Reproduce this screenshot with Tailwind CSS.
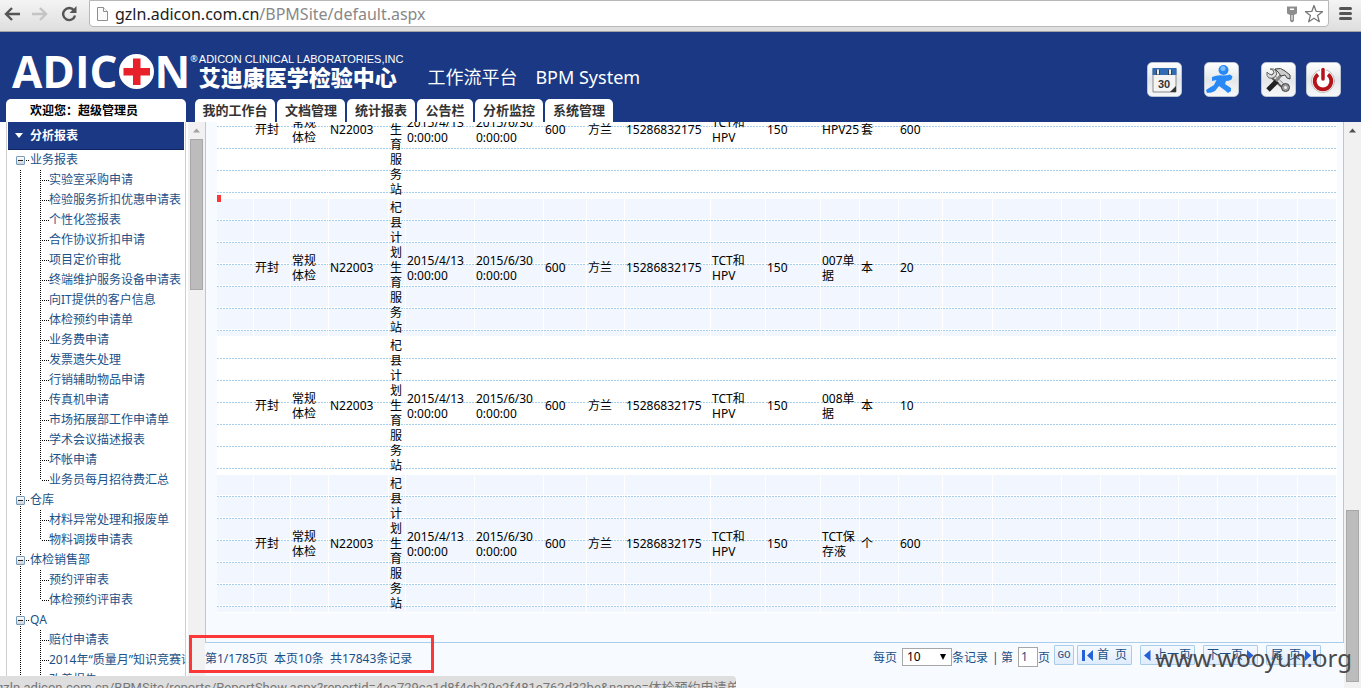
<!DOCTYPE html>
<html lang="zh-CN">
<head>
<meta charset="utf-8">
<title>BPM System</title>
<script src="https://cdn.jsdelivr.net/npm/@tailwindcss/browser@4"></script>
</head>
<body class="relative flex h-screen flex-col overflow-hidden bg-white font-['Noto_Sans','Noto_Sans_CJK_SC',sans-serif] text-xs text-black">

<!-- Browser toolbar -->
<div class="flex h-8 shrink-0 items-start border-b border-[#a3a3a3] bg-linear-to-b from-[#f4f4f4] to-[#dedede]">
  <div class="flex h-7 w-[89px] shrink-0 items-center gap-3 pl-1">
    <button aria-label="后退"><svg class="h-4 w-4" viewBox="0 0 16 16" fill="none" stroke="#555" stroke-width="2.4"><path d="M16 8H2.5M8 2L2 8l6 6"/></svg></button>
    <button aria-label="前进"><svg class="h-4 w-4" viewBox="0 0 16 16" fill="none" stroke="#c4c4c4" stroke-width="2.4"><path d="M0 8h13.500M8 2l6 6-6 6"/></svg></button>
    <button aria-label="重新加载"><svg class="ml-px h-4 w-4" viewBox="0 0 16 16"><path d="M13 4.500A6 6 0 1 0 14 9.500" fill="none" stroke="#555" stroke-width="2.400"/><path d="M15.500 0v7H8.500z" fill="#555"/></svg></button>
  </div>
  <div class="flex h-[27px] flex-1 items-center rounded-b-sm border border-[#b8b8b8] bg-white pl-[6px] pr-1">
    <svg class="h-4 w-[13px] shrink-0" viewBox="0 0 13 16" fill="#fafafa" stroke="#8e8e8e"><path d="M1.500 1.500h6l4 4v9h-10z"/><path d="M7.500 1.500v4h4" /></svg>
    <p class="ml-[6px] flex-1 whitespace-nowrap text-base leading-6 text-[#1c1c1c]">gzln.adicon.com.cn<span class="text-[#888]">/BPMSite/default.aspx</span></p>
    <svg class="h-[18px] w-3" viewBox="0 0 12 18"><path fill="#8d8d8d" fill-rule="evenodd" d="M1 1.500h10v7L8 10v6l-2 1.500L4 16v-6L1 8.500zM4 3.500v1.500h4V3.500zM5.500 10v5h1v-5z"/></svg>
    <svg class="ml-[6px] h-5 w-5" viewBox="0 0 20 20" fill="#fff" stroke="#777" stroke-width="1.300" stroke-linejoin="round"><path d="M10 1.500l2.200 5.900 6.300.3-4.900 3.900 1.700 6.100L10 14.200l-5.300 3.500 1.700-6.100L1.500 7.700l6.300-.3z"/></svg>
  </div>
  <button class="flex h-[27px] w-8 flex-col items-center justify-center gap-[2px]" aria-label="菜单">
    <span class="h-[3px] w-[13px] rounded-sm bg-[#555]"></span><span class="h-[3px] w-[13px] rounded-sm bg-[#555]"></span><span class="h-[3px] w-[13px] rounded-sm bg-[#555]"></span>
  </button>
</div>

<!-- Site header -->
<header class="flex h-[90px] shrink-0 flex-col justify-between bg-[#1a3883]">
  <div class="flex h-[67px] items-end justify-between pr-5">
    <div class="flex items-end whitespace-nowrap pb-[10px] pl-3 text-white">
      <div class="flex h-9 items-center font-['Open_Sans',sans-serif] text-[44px] font-bold leading-9">
        <span>ADIC</span>
        <svg class="mx-px h-[35px] w-[35px]" viewBox="0 0 35 35"><circle cx="17.500" cy="17.500" r="17.500" fill="#fff"/><path d="M14 4.500h7.500v9.500h9.500v7.500h-9.500V31H14v-9.500H4.500V14H14z" fill="#e8202a"/></svg>
        <span>N</span>
      </div>
      <span class="mb-6 text-[9px] leading-3">®</span>
      <div class="ml-px flex flex-col">
        <span class="font-['Liberation_Sans',sans-serif] text-[11px] leading-3">ADICON CLINICAL LABORATORIES,INC</span>
        <span class="text-[22px] font-black leading-6">艾迪康医学检验中心</span>
      </div>
      <div class="ml-6 flex gap-[18px] text-lg leading-6"><span>工作流平台</span><span>BPM System</span></div>
    </div>
    <div class="flex pb-[2px]">
      <button aria-label="日历" class="h-[35px] w-[35px] rounded-[5px] border border-[#b9c3d2] bg-linear-to-b from-white via-[#e4e7ea] to-[#f6f7f8]">
        <svg class="h-full w-full" viewBox="0 0 33 33"><path d="M5 6h23v23H5z" fill="#f4f4f4" stroke="#8a8a8a"/><path d="M4.500 5h24v7h-24z" fill="#2f6cb4"/><path d="M10 7v5M22 7v5" stroke="#333" stroke-width="3.500"/><path d="M10 6.500v5M22 6.500v5" stroke="#fff" stroke-width="1.800"/><path d="M28 23v6h-6z" fill="#333"/><text x="16" y="25" text-anchor="middle" font-family="Liberation Sans" font-weight="bold" font-size="11" fill="#333">30</text></svg>
      </button>
      <button aria-label="流程" class="ml-[22px] h-[35px] w-[35px] rounded-[5px] border border-[#b9c3d2] bg-linear-to-b from-white via-[#e4e7ea] to-[#f6f7f8]">
        <svg class="h-full w-full" viewBox="0 0 33 33"><circle cx="18.500" cy="7" r="5" fill="#2889f6"/><circle cx="18" cy="5.500" r="2.500" fill="#7fc0ff"/><path d="M7 14q6-2.500 11-1.500 4 0 7-1l2.500 2-1 3q-3 1.500-5.500 1.500l-1 3 6 4v3l-3 2-3.500-3-5.500-4-4 5q-3 2-8 2l-1-3 3-2 5-3 2.500-5-4.500 1z" fill="#2889f6"/></svg>
      </button>
      <button aria-label="设置" class="ml-[22px] h-[35px] w-[35px] rounded-[5px] border border-[#b9c3d2] bg-linear-to-b from-white via-[#e4e7ea] to-[#f6f7f8]">
        <svg class="h-full w-full" viewBox="0 0 33 33"><path d="M9 12l14 13" stroke="#555" stroke-width="5"/><path d="M10 12l13 12" stroke="#ddd" stroke-width="2.500"/><path d="M8 6l3 1 1 3-2 2-3-1-2-2q-1 4 2 6 3 1 6-1 3-3 1-6-2-3-6-2z" fill="#ddd" stroke="#666"/><circle cx="23.500" cy="24.500" r="4" fill="#999" stroke="#444"/><circle cx="23.500" cy="24.500" r="1.500" fill="#eee"/><path d="M6 27L15 18" stroke="#222" stroke-width="5"/><path d="M14 18l6-7" stroke="#888" stroke-width="3"/><path d="M13 6q6-2 10 2l5 4v4l-3-1-2-3-4 1-3-4z" fill="#ccc" stroke="#444"/></svg>
      </button>
      <button aria-label="退出" class="ml-[10px] h-[35px] w-[35px] rounded-[5px] border border-[#b9c3d2] bg-linear-to-b from-white via-[#e4e7ea] to-[#f6f7f8]">
        <svg class="h-full w-full" viewBox="0 0 33 33" fill="none" stroke-linecap="round"><circle cx="16" cy="18" r="11.500" fill="#fff" stroke="#aaa" stroke-width=".8"/><path d="M11 11.500a8.300 8.300 0 1 0 10 0" stroke="#b5121b" stroke-width="3.800" stroke-linecap="butt"/><path d="M16 6.500v9" stroke="#fff" stroke-width="6"/><path d="M16 6.500v9.500" stroke="#b5121b" stroke-width="3.500"/></svg>
      </button>
    </div>
  </div>
  <div class="flex h-[23px] whitespace-nowrap pl-[6px]">
    <p class="w-[180px] rounded-t-[5px] bg-white pl-6 font-bold leading-6">欢迎您：超级管理员</p>
    <nav class="ml-[9px] flex gap-[2px] text-[13px] font-bold leading-[22px] text-[#333] *:flex *:h-[23px] *:justify-center *:rounded-t-[5px] *:bg-white">
      <a href="#" class="w-20">我的工作台</a><a href="#" class="w-[68px]">文档管理</a><a href="#" class="w-[68px]">统计报表</a><a href="#" class="w-14">公告栏</a><a href="#" class="w-[68px]">分析监控</a><a href="#" class="w-[68px]">系统管理</a>
    </nav>
  </div>
</header>

<div class="flex min-h-0 flex-1">
  <!-- Report tree -->
  <aside class="flex w-[205px] shrink-0 pl-[6px]">
    <div class="w-[180px] overflow-hidden whitespace-nowrap border-x border-[#cfcfcf] px-px leading-5 text-[#1b5289]">
      <h2 class="flex h-7 items-center border-b border-[#0e2560] bg-[#1a3883] pl-[7px] font-bold text-white">
        <svg class="mr-[7px] h-[5px] w-2" viewBox="0 0 8 5"><path d="M0 0h8L4 5z" fill="#fff"/></svg>分析报表
      </h2>
      <div class="pl-2 [&_h3]:flex [&_h3]:h-5 [&_h3]:items-center
        [&_h3]:bg-[size:1px_2px] [&_h3]:bg-repeat-y [&_h3]:bg-position-[4px_0] [&_h3:not(:first-child)]:bg-[image:linear-gradient(#000_50%,transparent_50%)]
        [&_h3]:before:mr-px [&_h3]:before:h-[9px] [&_h3]:before:w-[9px] [&_h3]:before:shrink-0 [&_h3]:before:rounded-[1px] [&_h3]:before:border [&_h3]:before:border-[#7899b8] [&_h3]:before:bg-[linear-gradient(#222,#222),linear-gradient(#fff,#ccd3da)] [&_h3]:before:bg-[size:5px_1px,100%_100%] [&_h3]:before:bg-center [&_h3]:before:bg-no-repeat [&_h3]:before:content-['']
        [&_i]:mr-px [&_i]:h-px [&_i]:w-[3px] [&_i]:bg-[size:2px_1px] [&_i]:bg-[image:linear-gradient(90deg,#000_50%,transparent_50%)]
        [&_ul]:ml-1 [&_ul]:bg-[size:1px_2px] [&_ul]:bg-repeat-y [&_ul]:bg-[image:linear-gradient(#000_50%,transparent_50%)] [&_ul]:pl-5
        [&_li]:flex [&_li]:h-5 [&_li]:items-center
        [&_li]:before:h-5 [&_li]:before:w-px [&_li]:before:shrink-0 [&_li]:before:bg-[size:1px_2px] [&_li]:before:bg-[image:linear-gradient(#000_50%,transparent_50%)] [&_li]:before:content-['']
        [&_li.end]:before:h-[10px] [&_li.end]:before:self-start
        [&_li]:after:order-1 [&_li]:after:h-px [&_li]:after:w-2 [&_li]:after:shrink-0 [&_li]:after:bg-[size:2px_1px] [&_li]:after:bg-[image:linear-gradient(90deg,transparent_50%,#000_50%)] [&_li]:after:content-[''] [&_li_a]:order-2">
        <h3><i></i><a href="#">业务报表</a></h3>
        <ul>
          <li><a href="#">实验室采购申请</a></li>
          <li><a href="#">检验服务折扣优惠申请表</a></li>
          <li><a href="#">个性化签报表</a></li>
          <li><a href="#">合作协议折扣申请</a></li>
          <li><a href="#">项目定价审批</a></li>
          <li><a href="#">终端维护服务设备申请表</a></li>
          <li><a href="#">向IT提供的客户信息</a></li>
          <li><a href="#">体检预约申请单</a></li>
          <li><a href="#">业务费申请</a></li>
          <li><a href="#">发票遗失处理</a></li>
          <li><a href="#">行销辅助物品申请</a></li>
          <li><a href="#">传真机申请</a></li>
          <li><a href="#">市场拓展部工作申请单</a></li>
          <li><a href="#">学术会议描述报表</a></li>
          <li><a href="#">坏帐申请</a></li>
          <li class="end"><a href="#">业务员每月招待费汇总</a></li>
        </ul>
        <h3><i></i><a href="#">仓库</a></h3>
        <ul>
          <li><a href="#">材料异常处理和报废单</a></li>
          <li class="end"><a href="#">物料调拨申请表</a></li>
        </ul>
        <h3><i></i><a href="#">体检销售部</a></h3>
        <ul>
          <li><a href="#">预约评审表</a></li>
          <li class="end"><a href="#">体检预约评审表</a></li>
        </ul>
        <h3><i></i><a href="#">QA</a></h3>
        <ul>
          <li><a href="#">赔付申请表</a></li>
          <li><a href="#">2014年“质量月”知识竞赛评</a></li>
          <li><a href="#">改善报告</a></li>
        </ul>
      </div>
    </div>
    <div class="ml-[2px] flex w-[17px] flex-col items-center bg-[#f1f1f1]">
      <svg class="my-[6px] h-[5px] w-[7px]" viewBox="0 0 7 5"><path d="M3.500 0.500L7 4.500H0z" fill="#a3a3a3"/></svg>
      <div class="h-[151px] w-[13px] border border-[#a8a8a8] bg-[#bcbcbc]"></div>
    </div>
  </aside>

  <!-- Report grid -->
  <main class="flex min-w-0 flex-1 flex-col bg-[#f7faff]">
    <div class="flex min-h-0 flex-1 flex-col justify-end overflow-hidden border-x border-b border-[#a8cdea] pb-[29px] pl-[11px] pr-[6px]">
      <table class="w-full shrink-0 table-fixed border-separate border-spacing-0 bg-white leading-[15px]
        [&_td]:h-[138px] [&_td]:border-r [&_td]:border-b [&_td]:border-white [&_td]:py-0 [&_td]:pl-px [&_td]:pr-0 [&_td]:align-middle [&_td]:bg-[size:3px_22px] [&_td]:bg-[image:conic-gradient(from_180deg_at_2px_21px,#a5cfed_90deg,transparent_90deg),linear-gradient(transparent_20px,#fff_20px)]
        [&_tr:nth-child(even)]:bg-[#f2f6fe]">
        <colgroup><col class="w-[37px]"><col class="w-[37px]"><col class="w-[38px]"><col class="w-[60px]"><col class="w-[17px]"><col class="w-[69px]"><col class="w-[69px]"><col class="w-[43px]"><col class="w-[38px]"><col class="w-[86px]"><col class="w-[55px]"><col class="w-[55px]"><col class="w-[39px]"><col class="w-[39px]"><col class="w-[44px]"><col class="w-[50px]"><col class="w-[69px]"><col class="w-[39px]"><col class="w-[39px]"><col class="w-[39px]"><col class="w-[39px]"><col class="w-[40px]"><col class="w-[40px]"><col class="w-[39px]"></colgroup>
        <tbody>
          <tr><td></td><td>开封</td><td>常规<br>体检</td><td>N22003</td><td>杞县计划生育服务站</td><td>2015/4/13 0:00:00</td><td>2015/6/30 0:00:00</td><td>600</td><td>方兰</td><td>15286832175</td><td>TCT和<br>HPV</td><td>150</td><td>HPV25</td><td>套</td><td>600</td><td></td><td></td><td></td><td></td><td></td><td></td><td></td><td></td><td></td></tr>
          <tr><td></td><td>开封</td><td>常规<br>体检</td><td>N22003</td><td>杞县计划生育服务站</td><td>2015/4/13 0:00:00</td><td>2015/6/30 0:00:00</td><td>600</td><td>方兰</td><td>15286832175</td><td>TCT和<br>HPV</td><td>150</td><td>007单<br>据</td><td>本</td><td>20</td><td></td><td></td><td></td><td></td><td></td><td></td><td></td><td></td><td></td></tr>
          <tr><td></td><td>开封</td><td>常规<br>体检</td><td>N22003</td><td>杞县计划生育服务站</td><td>2015/4/13 0:00:00</td><td>2015/6/30 0:00:00</td><td>600</td><td>方兰</td><td>15286832175</td><td>TCT和<br>HPV</td><td>150</td><td>008单<br>据</td><td>本</td><td>10</td><td></td><td></td><td></td><td></td><td></td><td></td><td></td><td></td><td></td></tr>
          <tr><td></td><td>开封</td><td>常规<br>体检</td><td>N22003</td><td>杞县计划生育服务站</td><td>2015/4/13 0:00:00</td><td>2015/6/30 0:00:00</td><td>600</td><td>方兰</td><td>15286832175</td><td>TCT和<br>HPV</td><td>150</td><td>TCT保<br>存液</td><td>个</td><td>600</td><td></td><td></td><td></td><td></td><td></td><td></td><td></td><td></td><td></td></tr>
        </tbody>
      </table>
    </div>
    <!-- Pager -->
    <div class="flex h-[45px] shrink-0 items-start justify-between whitespace-nowrap pr-[23px] text-[#1b4f86]">
      <p class="pt-[6px] leading-5">第1/1785页&nbsp; 本页10条&nbsp; 共17843条记录</p>
      <form class="flex items-start pt-[2px] leading-[26px]">
        <label for="size">每页</label>
        <div class="relative ml-[5px] mt-[3px] flex items-center text-black">
          <select id="size" class="h-[18px] w-[50px] appearance-none border border-[#a6a6a6] bg-white pl-1 leading-4"><option>10</option><option>20</option></select>
          <svg class="pointer-events-none absolute right-[6px] h-[6px] w-[6px]" viewBox="0 0 6 6"><path d="M0 0h6L3 6z" fill="#000"/></svg>
        </div>
        <span>条记录</span><span class="mx-1 w-[5px] text-center">|</span><label for="page">第</label>
        <input id="page" value="1" class="ml-[5px] mt-[2px] h-5 w-5 border border-[#a6a6a6] bg-white pl-[2px] text-[#1b4f86]">
        <span>页</span>
        <button type="button" class="ml-1 h-5 w-5 rounded-[1px] border border-[#a8cdea] bg-linear-to-b from-[#f5f9ff] to-[#dfecfd] font-['Liberation_Mono',monospace] text-[11px] leading-4">GO</button>
        <div class="ml-[3px] flex gap-2 *:flex *:h-5 *:w-[55px] *:items-center *:justify-center *:gap-1 *:rounded-[1px] *:border *:border-[#a8cdea] *:bg-linear-to-b *:from-[#f5f9ff] *:to-[#dfecfd] *:leading-4">
          <button type="button"><svg class="h-[11px] w-[11px]" viewBox="0 0 11 11" fill="#2461d8"><path d="M0 0h3v11H0zM11 0v11L5 5.500z"/></svg><span>首&ensp;页</span></button>
          <button type="button"><svg class="h-[11px] w-[7px]" viewBox="0 0 7 11" fill="#2461d8"><path d="M6.500 0v11L0 5.500z"/></svg><span>上一页</span></button>
          <button type="button"><span>下一页</span><svg class="h-[11px] w-[7px]" viewBox="0 0 7 11" fill="#2461d8"><path d="M0 0v11l6.500-5.500z"/></svg></button>
          <button type="button"><span>尾&ensp;页</span><svg class="h-[11px] w-[11px]" viewBox="0 0 11 11" fill="#2461d8"><path d="M8 0h3v11H8zM0 0v11l6-5.500z"/></svg></button>
        </div>
      </form>
    </div>
  </main>

  <!-- Page scrollbar -->
  <div class="flex w-[17px] shrink-0 flex-col items-center justify-between bg-[#f1f1f1] pb-[6px]">
    <svg class="mt-[6px] h-[5px] w-[7px]" viewBox="0 0 7 5"><path d="M3.500 0.500L7 4.500H0z" fill="#505050"/></svg>
    <div class="h-[172px] w-[13px] border border-[#a8a8a8] bg-[#bcbcbc]"></div>
  </div>
</div>

<!-- Overlays: link status bubble, highlight marks, watermark -->
<div class="absolute -bottom-2 left-0 h-5 w-[736px] overflow-hidden whitespace-nowrap rounded-tr bg-[#dedede] font-['Roboto','Noto_Sans_CJK_SC',sans-serif] text-[13px] leading-6 text-[#777]"><span class="-ml-1">gzln.adicon.com.cn/BPMSite/reports/ReportShow.aspx?reportid=4ea729ca1d8f4cb29e2f481e762d32be&amp;name=体检预约申请单</span></div>
<div class="absolute left-[217px] top-[195px] h-[7px] w-1 bg-[#fb3738]"></div>
<div class="absolute bottom-[15px] left-[189px] h-[38px] w-[245px] border-3 border-[#fb3738]"></div>
<div class="pointer-events-none absolute bottom-[14px] right-[9px] text-2xl leading-8 text-[#4a4a4a]">www.wooyun.org</div>
</body>
</html>
